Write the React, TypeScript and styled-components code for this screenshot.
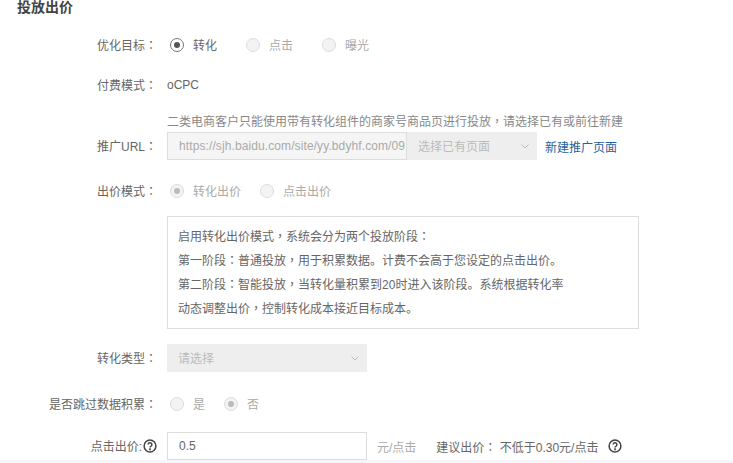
import React from "react";
import styled, { createGlobalStyle } from "styled-components";

const Global = createGlobalStyle`
  html, body { margin: 0; padding: 0; background: #fff; }
  body { font-family: "Liberation Sans", "Noto Sans CJK SC", sans-serif; font-size: 12px; color: #666; }
`;
const Page = styled.div`
  width: 733px; height: 463px; overflow: hidden; background: #fff; display: flex; flex-direction: column;
`;
const Content = styled.div`
  height: 460px; flex: none; overflow: hidden; display: flex; flex-direction: column;
`;
const Footer = styled.div`
  height: 3px; flex: none; background: #f5f5fa;
`;
const Title = styled.h2`
  flex: none; margin: 0 0 0 17px; height: 14px; line-height: 14px; font-size: 14px; font-weight: 700; color: #444;
`;
const Row = styled.div<{ $top: number }>`
  flex: none; display: grid; grid-template-columns: 157px 1fr; column-gap: 10px; align-items: center;
  margin-top: ${p => p.$top}px; height: 28px;
`;
const Label = styled.div`
  white-space: nowrap; color: #666; display: flex; justify-content: flex-end; align-items: center; padding-bottom: 1px;
`;
const Punct = styled.span`
  font-family: "Noto Sans CJK TC", sans-serif;
`;
const Controls = styled.div`
  display: flex; align-items: center; white-space: nowrap;
`;
const RadioGroup = styled(Controls)`
  padding-left: 3px;
`;
const RadioItem = styled.label<{ $w: number; $off?: boolean }>`
  display: flex; align-items: center; gap: 9px; width: ${p => p.$w}px; color: ${p => (p.$off ? "#aaa" : "#666")};
`;
const RadioText = styled.span`
  padding-bottom: 2px;
`;
const RadioCircle = styled.span<{ $on?: boolean; $off?: boolean }>`
  box-sizing: border-box; width: 14px; height: 14px; border-radius: 50%; flex: none;
  border: 1px solid ${p => (p.$off ? "#ddd" : "#777")};
  background: ${p => (p.$off ? "#f3f3f3" : "#fff")};
  display: flex; align-items: center; justify-content: center;
  &::after {
    content: ""; display: ${p => (p.$on ? "block" : "none")}; width: 6px; height: 6px; border-radius: 50%;
    background: ${p => (p.$off ? "#bbb" : "#555")};
  }
`;
const Plain = styled.span`
  color: #666;
`;
const Hint = styled.div`
  flex: none; margin: 15px 0 0 167px; height: 14px; line-height: 14px; color: #888; white-space: nowrap;
`;
const UrlInput = styled.div`
  box-sizing: border-box; width: 240px; height: 28px; line-height: 26px; padding: 0 0 0 11px; overflow: hidden; white-space: nowrap;
  background: #f5f5f5; border: 1px solid #ddd; color: #aaa; letter-spacing: 0.1px;
`;
const SelectBox = styled.div<{ $w: number }>`
  box-sizing: border-box; width: ${p => p.$w}px; height: 28px; padding: 0 7px 1px 11px; background: #eee; color: #bbb;
  display: flex; align-items: center; justify-content: space-between;
`;
const LinkText = styled.a`
  margin-left: 8px; color: #2a6099; text-decoration: none;
`;
const InfoBox = styled.div`
  flex: none; box-sizing: border-box; margin: 11px 0 0 167px; width: 472px; height: 113px; border: 1px solid #ddd; padding: 7px 10px;
  color: #666; white-space: nowrap;
`;
const InfoLine = styled.div`
  height: 24px; line-height: 24px;
`;
const NumberInput = styled.div`
  box-sizing: border-box; width: 200px; height: 28px; line-height: 26px; padding: 0 11px; border: 1px solid #ddd; color: #666; background: #fff;
`;
const Unit = styled.span`
  margin-left: 10px; color: #aaa;
`;
const Suggest = styled.span`
  margin-left: 20px; color: #666;
`;
const HelpIcon = styled.svg<{ $ml?: number }>`
  width: 14px; height: 14px; flex: none; margin-left: ${p => p.$ml ?? 0}px;
`;

/* The reference's full-width comma and colon sit in the middle of their cell, as in the TC cut. */
const cjk = (text: string) =>
  text.split(/([，：])/).map((part, i) =>
    part === "，" || part === "：" ? <Punct key={i}>{part}</Punct> : part
  );

const Chevron = () => (
  <svg width="10" height="10" viewBox="0 0 10 10" fill="none" stroke="#bbb" strokeWidth="1">
    <path d="M1.5 3.5 5 7l3.500-3.500" />
  </svg>
);
const Help = ({ ml }: { ml?: number }) => (
  <HelpIcon $ml={ml} viewBox="0 0 14 14" fill="none" stroke="#444" strokeWidth="1.5">
    <circle cx="7" cy="7" r="5.9" />
    <path d="M5.100 5.600a1.900 1.900 0 1 1 2.800 1.700c-.6.300-.9.700-.9 1.300" />
    <circle cx="7" cy="10.300" r=".4" fill="#444" />
  </HelpIcon>
);
const Radio = ({ w, on, off, text }: { w: number; on?: boolean; off?: boolean; text: string }) => (
  <RadioItem $w={w} $off={off}>
    <RadioCircle $on={on} $off={off} />
    <RadioText>{text}</RadioText>
  </RadioItem>
);

const infoLines = [
  "启用转化出价模式，系统会分为两个投放阶段：",
  "第一阶段：普通投放，用于积累数据。计费不会高于您设定的点击出价。",
  "第二阶段：智能投放，当转化量积累到20时进入该阶段。系统根据转化率",
  "动态调整出价，控制转化成本接近目标成本。",
];

export default function App() {
  return (
    <Page>
      <Global />
      <Content>
        <Title>投放出价</Title>
        <Row $top={17}>
          <Label>{cjk("优化目标：")}</Label>
          <RadioGroup>
            <Radio w={76} on text="转化" />
            <Radio w={76} off text="点击" />
            <Radio w={70} off text="曝光" />
          </RadioGroup>
        </Row>
        <Row $top={12}>
          <Label>{cjk("付费模式：")}</Label>
          <Controls><Plain>oCPC</Plain></Controls>
        </Row>
        <Hint>{cjk("二类电商客户只能使用带有转化组件的商家号商品页进行投放，请选择已有或前往新建")}</Hint>
        <Row $top={4}>
          <Label>{cjk("推广URL：")}</Label>
          <Controls>
            <UrlInput>https://sjh.baidu.com/site/yy.bdyhf.com/09</UrlInput>
            <SelectBox $w={130}>选择已有页面<Chevron /></SelectBox>
            <LinkText>新建推广页面</LinkText>
          </Controls>
        </Row>
        <Row $top={17}>
          <Label>{cjk("出价模式：")}</Label>
          <RadioGroup>
            <Radio w={90} on off text="转化出价" />
            <Radio w={90} off text="点击出价" />
          </RadioGroup>
        </Row>
        <InfoBox>
          {infoLines.map(line => (
            <InfoLine key={line}>{cjk(line)}</InfoLine>
          ))}
        </InfoBox>
        <Row $top={15}>
          <Label>{cjk("转化类型：")}</Label>
          <Controls><SelectBox $w={200}>请选择<Chevron /></SelectBox></Controls>
        </Row>
        <Row $top={18}>
          <Label>{cjk("是否跳过数据积累：")}</Label>
          <RadioGroup>
            <Radio w={54} off text="是" />
            <Radio w={40} on off text="否" />
          </RadioGroup>
        </Row>
        <Row $top={14}>
          <Label>点击出价:<Help ml={1} /></Label>
          <Controls>
            <NumberInput>0.5</NumberInput>
            <Unit>元/点击</Unit>
            <Suggest>{cjk("建议出价： 不低于0.30元/点击")}</Suggest>
            <Help ml={10} />
          </Controls>
        </Row>
      </Content>
      <Footer />
    </Page>
  );
}
